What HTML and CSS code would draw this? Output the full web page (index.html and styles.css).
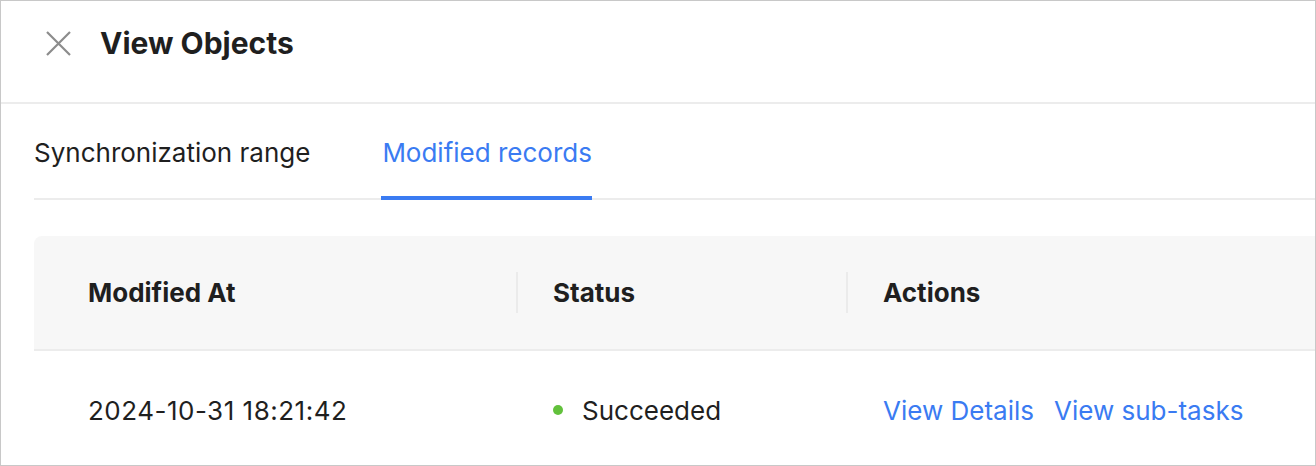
FILE: index.html
```html
<!DOCTYPE html>
<html>
<head>
    <title>View Objects</title>
    <meta name="viewport" content="width=device-width, initial-scale=1">
    <link rel="stylesheet" href="styles.css">
</head>
<body>

<div class="frame">
    <div class="header">
        <svg class="close" width="25" height="25" viewBox="0 0 25 25">
            <path d="M1 1 L24 24 M24 1 L1 24" stroke="#8c8c8c" stroke-width="2.2" fill="none"/>
        </svg>
        <h2 class="title">View Objects</h2>
    </div>

    <div class="tabs">
        <div class="tab">Synchronization range</div>
        <div class="tab active">Modified records</div>
    </div>

    <div class="table">
        <div class="row head">
            <div class="cell c1">Modified At</div>
            <div class="cell c2">Status</div>
            <div class="cell c3">Actions</div>
        </div>
        <div class="row">
            <div class="cell c1 date">2024-10-31 18:21:42</div>
            <div class="cell c2"><span class="dot"></span>Succeeded</div>
            <div class="cell c3"><a href="#">View Details</a><a href="#">View sub-tasks</a></div>
        </div>
    </div>
</div>

</body>
</html>
```

FILE: styles.css
```css
body { margin: 0; font-family: Inter, "Noto Sans", sans-serif; color: #1f1f1f; background: #fff; }
.frame { width: 1316px; height: 466px; box-sizing: border-box; border: 1px solid #c8c8c8; overflow: hidden; }

.header { height: 103px; box-sizing: border-box; border-bottom: 2px solid #ececec; display: flex; align-items: center; padding: 0 0 17px 45px; }
.close { display: block; margin-right: 29px; }
.title { margin: 0; font-size: 30px; line-height: 34px; font-weight: 700; }

.tabs { margin-left: 33px; display: flex; gap: 72px; border-bottom: 2px solid #ececec; }
.tab { position: relative; font-size: 26px; line-height: 30px; padding: 34px 0 30px; }
.tab.active { color: #3a7bf2; }
.tab.active::after { content: ""; position: absolute; left: -1px; right: 0; bottom: -2px; height: 4px; background: #3a7bf2; }

.table { margin: 36px -20px 0 33px; }
.row { display: flex; align-items: center; height: 118px; font-size: 26px; }
.row.head { height: 113px; background: #f7f7f7; border-radius: 8px 8px 0 0; border-bottom: 2px solid #ececec; font-weight: 700; }
.cell { display: flex; align-items: center; padding-left: 35px; box-sizing: border-box; }
.cell.c1 { width: 482px; padding-left: 54px; }
.cell.c2 { width: 330px; }
.cell.c3 { flex: 1; }
.date { letter-spacing: 0.5px; }
.row.head .cell.c2, .row.head .cell.c3 { border-left: 2px solid #ebebeb; height: 41px; }
.row:not(.head) .cell.c2, .row:not(.head) .cell.c3 { border-left: 2px solid transparent; }
.dot { width: 10px; height: 10px; border-radius: 50%; background: #62c13c; margin-right: 19px; }
.cell a { color: #3a7bf2; text-decoration: none; margin-right: 20px; }
```
